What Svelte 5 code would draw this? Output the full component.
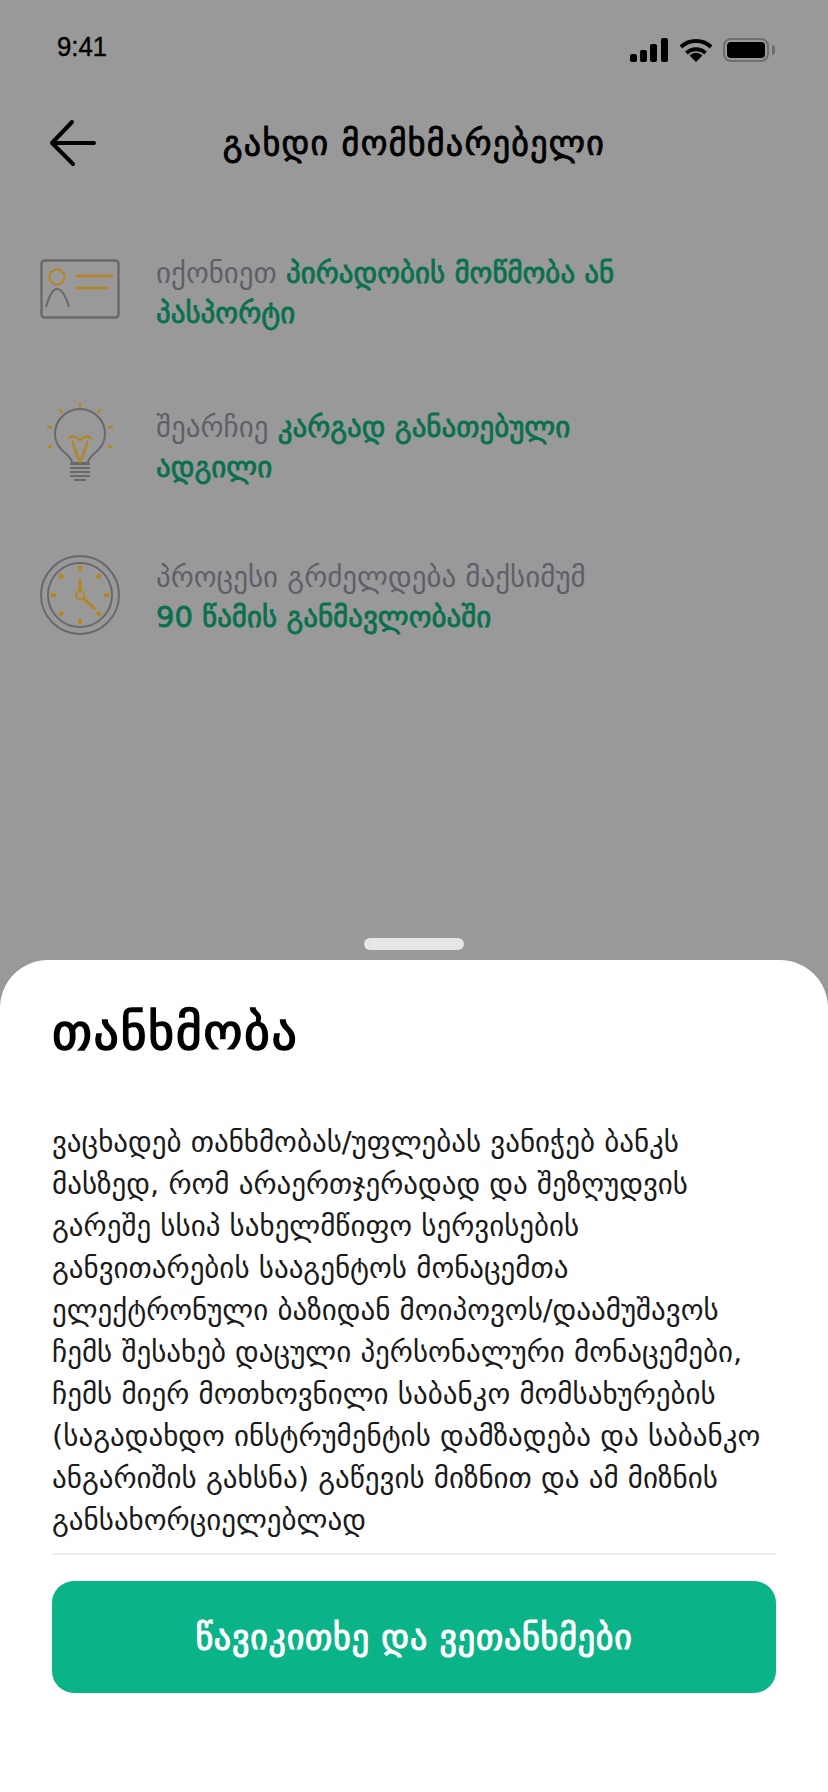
<script>
  const steps = [
    { icon: 'card', plain: 'იქონიეთ ', bold: 'პირადობის მოწმობა ან პასპორტი' },
    { icon: 'bulb', plain: 'შეარჩიე ', bold: 'კარგად განათებული ადგილი' },
    { icon: 'clock', plain: 'პროცესი გრძელდება მაქსიმუმ ', bold: '90 წამის განმავლობაში' }
  ];

  const lines = [
    'ვაცხადებ თანხმობას/უფლებას ვანიჭებ ბანკს',
    'მასზედ, რომ არაერთჯერადად და შეზღუდვის',
    'გარეშე სსიპ სახელმწიფო სერვისების',
    'განვითარების სააგენტოს მონაცემთა',
    'ელექტრონული ბაზიდან მოიპოვოს/დაამუშავოს',
    'ჩემს შესახებ დაცული პერსონალური მონაცემები,',
    'ჩემს მიერ მოთხოვნილი საბანკო მომსახურების',
    '(საგადახდო ინსტრუმენტის დამზადება და საბანკო',
    'ანგარიშის გახსნა) გაწევის მიზნით და ამ მიზნის',
    'განსახორციელებლად'
  ];

  const rays = [0, 36, 72, 108, -36, -72, -108];
  const ticks = [0, 45, 90, 135, 180, 225, 270, 315];
</script>

<div class="screen">
  <header class="status">
    <span class="time">9:41</span>
    <div class="status-icons">
      <svg width="39" height="24" viewBox="0 0 39 24">
        <rect x="0" y="16" width="7" height="8" rx="2" />
        <rect x="10" y="12" width="7" height="12" rx="2" />
        <rect x="20" y="6" width="7" height="18" rx="2" />
        <rect x="31" y="0" width="7" height="24" rx="2" />
      </svg>
      <svg width="34" height="24" viewBox="0 0 34 24">
        <path d="M2 9a22 22 0 0 1 30 0M7.500 15a14 14 0 0 1 19 0" fill="none" stroke="#000" stroke-width="4" />
        <path d="M17 24l-6.500-6.500a9 9 0 0 1 13 0z" />
      </svg>
      <div class="battery"><span></span></div>
    </div>
  </header>

  <nav class="topbar">
    <svg class="back" width="48" height="48" viewBox="0 0 48 48">
      <path d="M46 24H4M24 3L4 24l21 21" fill="none" stroke="#000" stroke-width="4" stroke-linecap="round" stroke-linejoin="round" />
    </svg>
    <h1>გახდი მომხმარებელი</h1>
  </nav>

  <ul class="steps">
    {#each steps as step}
      <li>
        <div class="step-icon {step.icon}">
          {#if step.icon === 'card'}
            <svg width="80" height="60" viewBox="0 0 80 60" fill="none">
              <rect x="1.500" y="1.500" width="77" height="57" rx="3" stroke="#68686f" stroke-width="2.400" />
              <circle cx="17" cy="18" r="7.500" stroke="#b5861f" stroke-width="2" />
              <path d="M36 17h37M36 29h33" stroke="#b5861f" stroke-width="2.400" />
              <path d="M6 48c3-10 6-18 11-18s9 8 12 18" stroke="#68686f" stroke-width="2" />
            </svg>
          {:else if step.icon === 'bulb'}
            <svg width="72" height="82" viewBox="0 0 72 82" fill="none">
              {#each rays as r}
                <path d="M36 1.500v5" stroke="#b5861f" stroke-width="2.200" transform="rotate({r} 36 36)" />
              {/each}
              <path d="M28 62c0-9-17-12-17-29a25 25 0 0 1 50 0c0 17-17 20-17 29z" stroke="#68686f" stroke-width="2" />
              <path d="M24 38c5-5 8-2 12 1 4-3 7-6 12-1M28 40l8 22 8-22" stroke="#b5861f" stroke-width="2.200" />
              <path d="M26 63h20M26 67h20M26 71h20M26 75h20M30 79h12" stroke="#68686f" stroke-width="2" />
            </svg>
          {:else}
            <svg width="80" height="80" viewBox="0 0 80 80" fill="none">
              <circle cx="40" cy="40" r="39" stroke="#68686f" stroke-width="2" />
              <circle cx="40" cy="40" r="32" stroke="#68686f" stroke-width="2" />
              {#each ticks as t}
                <path d="M40 11v5" stroke="#b5861f" stroke-width="4" transform="rotate({t} 40 40)" />
              {/each}
              <path d="M40 24v12M43 43l12 11" stroke="#b5861f" stroke-width="3" />
              <circle cx="40" cy="40" r="4" stroke="#b5861f" stroke-width="2" />
            </svg>
          {/if}
        </div>
        <p><span class="plain">{step.plain}</span><b>{step.bold}</b></p>
      </li>
    {/each}
  </ul>

  <div class="handle"></div>
  <section class="sheet">
    <h2>თანხმობა</h2>
    <div class="body">
      {#each lines as line}
        <div>{line}</div>
      {/each}
    </div>
    <div class="rule"></div>
    <button type="button">წავიკითხე და ვეთანხმები</button>
  </section>
</div>

<style>
  :global(body) {
    margin: 0;
  }

  .screen {
    position: relative;
    width: 828px;
    height: 1792px;
    overflow: hidden;
    background: #999;
    font-family: "DejaVu Sans", "Noto Sans", sans-serif;
    color: #000;
  }

  .status {
    display: flex;
    justify-content: space-between;
    align-items: center;
    height: 48px;
    padding: 23px 52px 0 57px;
  }

  .time {
    font-family: "Liberation Sans", sans-serif;
    font-size: 28px;
    display: inline-block;
    transform: scaleX(0.92);
    transform-origin: left;
    -webkit-text-stroke: 0.4px #000;
  }

  .status-icons {
    display: flex;
    align-items: center;
    gap: 10px;
    margin-top: 6px;
  }

  .battery {
    position: relative;
    width: 46px;
    height: 24px;
    margin-right: 7px;
    padding: 2px;
    box-sizing: border-box;
    border: 2px solid #6e6e6e;
    border-radius: 8px;
  }

  .battery span {
    display: block;
    height: 100%;
    border-radius: 4px;
    background: #000;
  }

  .battery::after {
    content: '';
    position: absolute;
    right: -8px;
    top: 5px;
    width: 3px;
    height: 10px;
    border-radius: 0 3px 3px 0;
    background: #6e6e6e;
  }

  .topbar {
    position: relative;
    display: flex;
    align-items: center;
    justify-content: center;
    height: 50px;
    margin-top: 47px;
  }

  .back {
    position: absolute;
    left: 48px;
    top: 1px;
  }

  h1 {
    margin: 0;
    font-size: 34px;
    letter-spacing: 1.300px;
    font-weight: 400;
    -webkit-text-stroke: 0.9px #000;
    line-height: 50px;
  }

  .steps {
    list-style: none;
    margin: 79px 0 0;
    padding: 0 40px;
    display: flex;
    flex-direction: column;
    gap: 72px;
  }

  .steps li {
    display: flex;
    align-items: flex-start;
    gap: 36px;
    height: 82px;
  }

  .step-icon {
    flex: none;
    width: 80px;
    display: flex;
    justify-content: center;
  }

  .step-icon.card {
    margin-top: 12px;
  }

  .steps p {
    margin: 6px 0 0;
    width: 472px;
    font-size: 29px;
    line-height: 40px;
  }

  .steps li:last-child p {
    margin-top: 2px;
  }

  .plain {
    color: #5f5f68;
  }

  .steps b {
    color: #08704f;
    font-weight: 400;
    -webkit-text-stroke: 0.8px #08704f;
  }

  .handle {
    position: absolute;
    left: 364px;
    top: 938px;
    width: 100px;
    height: 12px;
    border-radius: 6px;
    background: #e6e6e6;
  }

  .sheet {
    position: absolute;
    left: 0;
    right: 0;
    top: 960px;
    bottom: 0;
    padding: 0 52px;
    background: #fff;
    border-radius: 48px 48px 0 0;
  }

  h2 {
    margin: 0;
    padding-top: 47px;
    font-size: 50px;
    letter-spacing: 1.500px;
    line-height: 50px;
    font-weight: 400;
    -webkit-text-stroke: 1.4px #000;
  }

  .body {
    margin-top: 64px;
    font-size: 29px;
    line-height: 42px;
    color: #1a1a1a;
    white-space: nowrap;
  }

  .rule {
    height: 2px;
    margin-top: 12px;
    background: #eee;
  }

  button {
    display: block;
    width: 100%;
    height: 112px;
    margin-top: 26px;
    border: 0;
    border-radius: 22px;
    background: #0ab388;
    color: #fff;
    font-family: inherit;
    font-size: 34px;
    letter-spacing: 0.800px;
    font-weight: 400;
    -webkit-text-stroke: 1.1px #fff;
  }
</style>
